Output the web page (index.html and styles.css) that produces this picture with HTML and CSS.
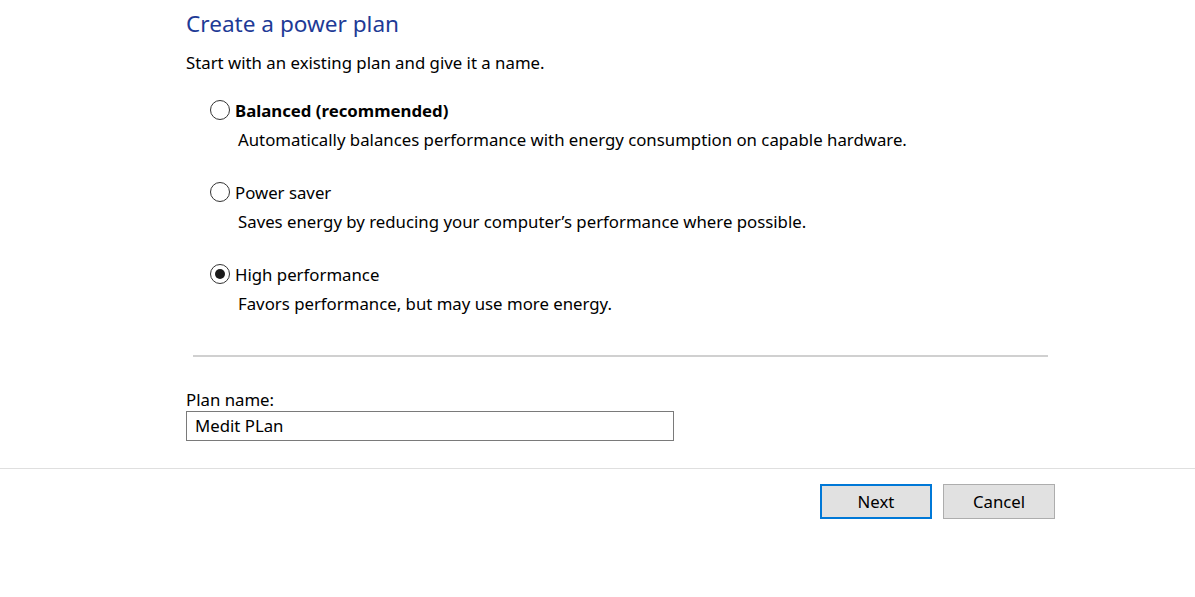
FILE: index.html
```html
<!DOCTYPE html>
<html>
<head>
<meta charset="utf-8">
<link rel="stylesheet" href="styles.css">
</head>
<body>
<div class="content">
  <h1 class="title">Create a power plan</h1>
  <p class="subtitle">Start with an existing plan and give it a name.</p>
  <div class="options">
    <div class="option">
      <div class="row"><span class="radio"></span><span class="label bold">Balanced (recommended)</span></div>
      <div class="desc">Automatically balances performance with energy consumption on capable hardware.</div>
    </div>
    <div class="option">
      <div class="row"><span class="radio"></span><span class="label">Power saver</span></div>
      <div class="desc">Saves energy by reducing your computer’s performance where possible.</div>
    </div>
    <div class="option">
      <div class="row"><span class="radio checked"></span><span class="label">High performance</span></div>
      <div class="desc">Favors performance, but may use more energy.</div>
    </div>
  </div>
  <div class="sep"></div>
  <div class="field-label">Plan name:</div>
  <div class="input">Medit PLan</div>
</div>
<div class="footer">
  <button class="btn primary">Next</button>
  <button class="btn">Cancel</button>
</div>
</body>
</html>
```

FILE: styles.css
```css
html, body {
  margin: 0;
  padding: 0;
  background: #ffffff;
}
body {
  font-family: "Noto Sans", "Open Sans", sans-serif;
  font-size: 16.8px;
  color: #000;
  width: 1195px;
  height: 597px;
  overflow: hidden;
}
.content {
  padding: 8px 0 0 186px;
  height: 460px;
  border-bottom: 1px solid #dfdfdf;
  box-sizing: content-box;
}
.title {
  margin: 0;
  font-weight: normal;
  font-size: 22.6px;
  line-height: 32px;
  color: #1e3a96;
}
.subtitle {
  margin: 10px 0 0 0;
  line-height: 26px;
}
.options {
  margin: 19px 0 0 24px;
  display: flex;
  flex-direction: column;
  gap: 22px;
}
.row {
  display: flex;
  align-items: center;
  gap: 5px;
  height: 30px;
}
.radio {
  width: 20px;
  height: 20px;
  box-sizing: border-box;
  border: 1px solid #333;
  border-radius: 50%;
  display: flex;
  align-items: center;
  justify-content: center;
  flex: none;
}
.radio.checked::after {
  content: "";
  width: 10px;
  height: 10px;
  border-radius: 50%;
  background: #1a1a1a;
}
.bold { font-weight: bold; }
.desc {
  margin-left: 28px;
  height: 30px;
  line-height: 30px;
}
.sep {
  margin: 36px 0 0 7px;
  width: 855px;
  height: 2px;
  background: #d0d0d0;
}
.field-label {
  margin-top: 31px;
  line-height: 23px;
}
.input {
  width: 488px;
  height: 30px;
  box-sizing: border-box;
  border: 1px solid #7a7a7a;
  padding-left: 8px;
  line-height: 28px;
}
.footer {
  display: flex;
  justify-content: flex-end;
  gap: 11px;
  padding: 15px 140px 0 0;
}
.btn {
  width: 112px;
  height: 35px;
  box-sizing: border-box;
  background: #e1e1e1;
  border: 1px solid #adadad;
  font-family: inherit;
  font-size: 16.8px;
  color: #000;
  padding: 0;
}
.btn.primary {
  border: 2px solid #0078d7;
}
```
